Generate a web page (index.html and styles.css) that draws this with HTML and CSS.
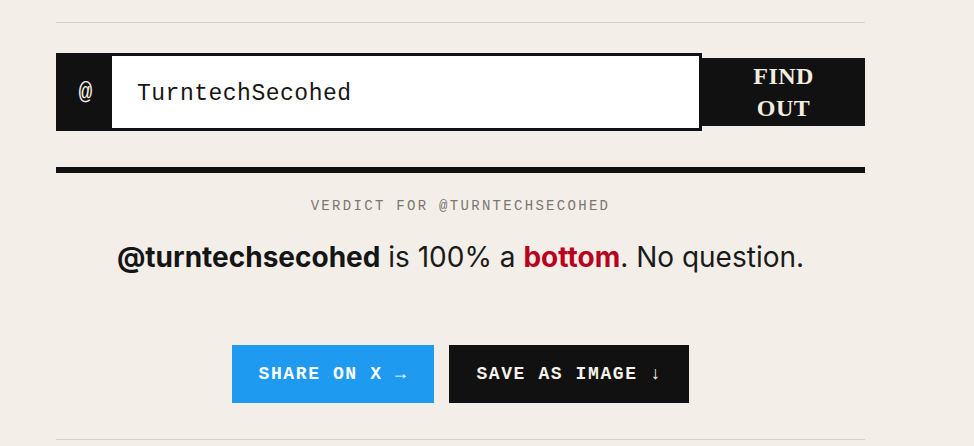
FILE: index.html
```html
<!DOCTYPE html>
<html lang="en">
<head>
<meta charset="utf-8">
<title>Verdict</title>
<link rel="stylesheet" href="styles.css">
</head>
<body>
<main class="page">
  <hr class="rule-thin">
  <form class="lookup">
    <div class="field">
      <span class="prefix">@</span>
      <input class="handle" type="text" value="TurntechSecohed">
    </div>
    <button class="find" type="button"><span class="find-label">FIND OUT</span></button>
  </form>
  <hr class="rule-thick">
  <section class="verdict">
    <p class="verdict-label">VERDICT FOR @TURNTECHSECOHED</p>
    <p class="verdict-text"><strong>@turntechsecohed</strong> is 100% a <strong class="accent">bottom</strong>. No question.</p>
    <div class="actions">
      <button class="btn btn-share" type="button">SHARE ON X →</button>
      <button class="btn btn-save" type="button">SAVE AS IMAGE ↓</button>
    </div>
  </section>
  <hr class="rule-thin rule-bottom">
</main>
</body>
</html>
```

FILE: styles.css
```css
html, body {
  margin: 0;
  padding: 0;
  background: #f3efe8;
}

body {
  font-family: "Inter", "Liberation Sans", sans-serif;
  color: #161616;
}

.page {
  width: 809px;
  margin-left: 56px;
  padding-top: 22px;
}

.rule-thin {
  margin: 0;
  border: 0;
  height: 1px;
  background: #d5d0c8;
}

.lookup {
  display: flex;
  align-items: center;
  margin-top: 30px;
}

.field {
  display: flex;
  width: 641px;
  height: 72px;
  border: 3px solid #111;
  background: #fff;
}

.prefix {
  width: 53px;
  background: #111;
  color: #f6f1e6;
  font-family: "Liberation Mono", "DejaVu Sans Mono", monospace;
  font-size: 23px;
  display: flex;
  align-items: center;
  justify-content: center;
  padding-top: 2px;
  box-sizing: border-box;
}

.handle {
  flex: 1;
  border: 0;
  outline: none;
  background: #fff;
  padding: 3px 0 0 25px;
  margin: 0;
  font-family: "Liberation Mono", "DejaVu Sans Mono", monospace;
  font-size: 23px;
  letter-spacing: 0.5px;
  color: #161616;
}

.find {
  width: 163px;
  height: 68px;
  border: 0;
  background: #111;
  color: #f3ede0;
  font-family: "Liberation Serif", serif;
  font-weight: bold;
  font-size: 24px;
  line-height: 32px;
  padding: 0;
  letter-spacing: 0.5px;
}

.find-label {
  display: inline-block;
  width: min-content;
}

.rule-thick {
  margin: 36px 0 0;
  border: 0;
  height: 6px;
  background: #111;
}

.verdict {
  text-align: center;
}

.verdict-label {
  margin: 25px 0 0;
  font-family: "Liberation Mono", "DejaVu Sans Mono", monospace;
  font-size: 14px;
  line-height: 16px;
  letter-spacing: 2.3px;
  color: #7a7670;
}

.verdict-text {
  margin: 25px 0 0;
  font-size: 28px;
  line-height: 36px;
  color: #1a1a1a;
}

.verdict-text strong {
  font-weight: 700;
  color: #151515;
}

.verdict-text .accent {
  color: #b8001f;
}

.actions {
  display: flex;
  justify-content: center;
  gap: 15px;
  margin-top: 70px;
}

.btn {
  height: 58px;
  border: 0;
  padding: 0 27px;
  font-family: "Liberation Mono", "DejaVu Sans Mono", monospace;
  font-weight: bold;
  font-size: 18px;
  letter-spacing: 1.6px;
  color: #f6f2ea;
}

.btn-share {
  background: #1e9bf0;
  color: #fff;
}

.btn-save {
  background: #111;
}

.rule-bottom {
  margin-top: 36px;
}
```
